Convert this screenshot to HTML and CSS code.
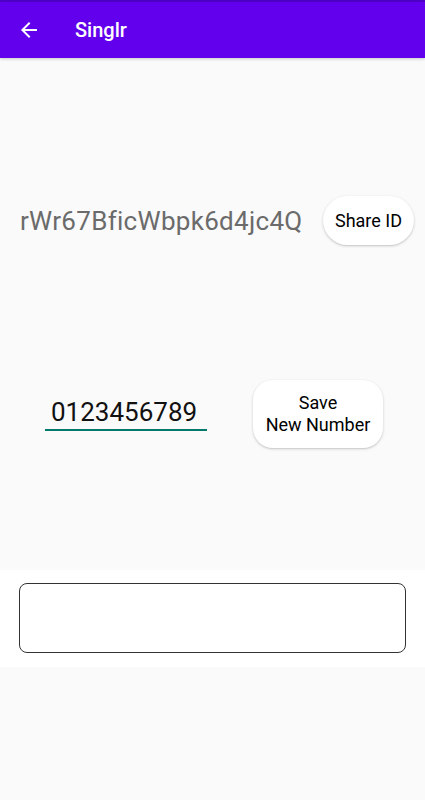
FILE: index.html
```html
<!DOCTYPE html>
<html>
<head>
<meta charset="utf-8">
<link rel="stylesheet" href="styles.css">
</head>
<body>
<div class="status"></div>
<header class="appbar">
  <svg class="back" width="24" height="24" viewBox="0 0 24 24"><path d="M20 11H7.83l5.59-5.59L12 4l-8 8 8 8 1.41-1.41L7.83 13H20v-2z" fill="#fff"/></svg>
  <span class="title">Singlr</span>
</header>
<main class="content">
  <div class="row row-id">
    <span class="id-text">rWr67BficWbpk6d4jc4Q</span>
    <button class="btn btn-share">Share ID</button>
  </div>
  <div class="row row-num">
    <div class="field"><span class="field-text">0123456789</span></div>
    <button class="btn btn-save">Save<br>New Number</button>
  </div>
  <section class="card">
    <div class="box"></div>
  </section>
</main>
</body>
</html>
```
FILE: styles.css
```css
* { box-sizing: border-box; }
html, body { margin: 0; padding: 0; }
body {
  width: 425px;
  height: 800px;
  background: #fafafa;
  font-family: Roboto, "Noto Sans", sans-serif;
  overflow: hidden;
}
.status { height: 2px; background: #4e00c8; }
.appbar {
  height: 56px;
  background: #6200ee;
  display: flex;
  align-items: center;
  padding-left: 17px;
  box-shadow: 0 1px 3px rgba(0,0,0,0.2);
}
.back { display: block; }
.title {
  color: #fff;
  font-size: 20px;
  font-weight: 500;
  margin-left: 34px;
}
.content { display: flex; flex-direction: column; }
.row { display: flex; align-items: center; }
.row-id {
  margin-top: 138px;
  padding-left: 20px;
  padding-right: 11px;
}
.id-text {
  color: #6b6b6b;
  font-size: 26px;
  letter-spacing: 0.3px;
}
.btn {
  border: none;
  background: #fff;
  color: #000;
  font-family: Roboto, "Noto Sans", sans-serif;
  font-size: 18px;
  font-weight: 400;
  box-shadow: 0 1px 3px rgba(0,0,0,0.18), 0 1px 1px rgba(0,0,0,0.06);
  padding: 0;
}
.btn-share {
  margin-left: auto;
  width: 91px;
  height: 49px;
  border-radius: 25px;
}
.row-num {
  margin-top: 135px;
  padding-left: 45px;
}
.field {
  width: 162px;
  height: 34px;
  border-bottom: 2px solid #00796b;
  display: flex;
  align-items: flex-end;
  padding-left: 6px;
  padding-bottom: 2px;
}
.field-text { font-size: 26px; color: #111; line-height: 30px; }
.btn-save {
  margin-left: 46px;
  width: 130px;
  height: 68px;
  border-radius: 20px;
  line-height: 22px;
}
.card {
  margin-top: 122px;
  background: #fff;
  height: 97px;
  padding: 13px 19px 0 19px;
}
.box {
  height: 70px;
  border: 1px solid #333;
  border-radius: 8px;
}
```
